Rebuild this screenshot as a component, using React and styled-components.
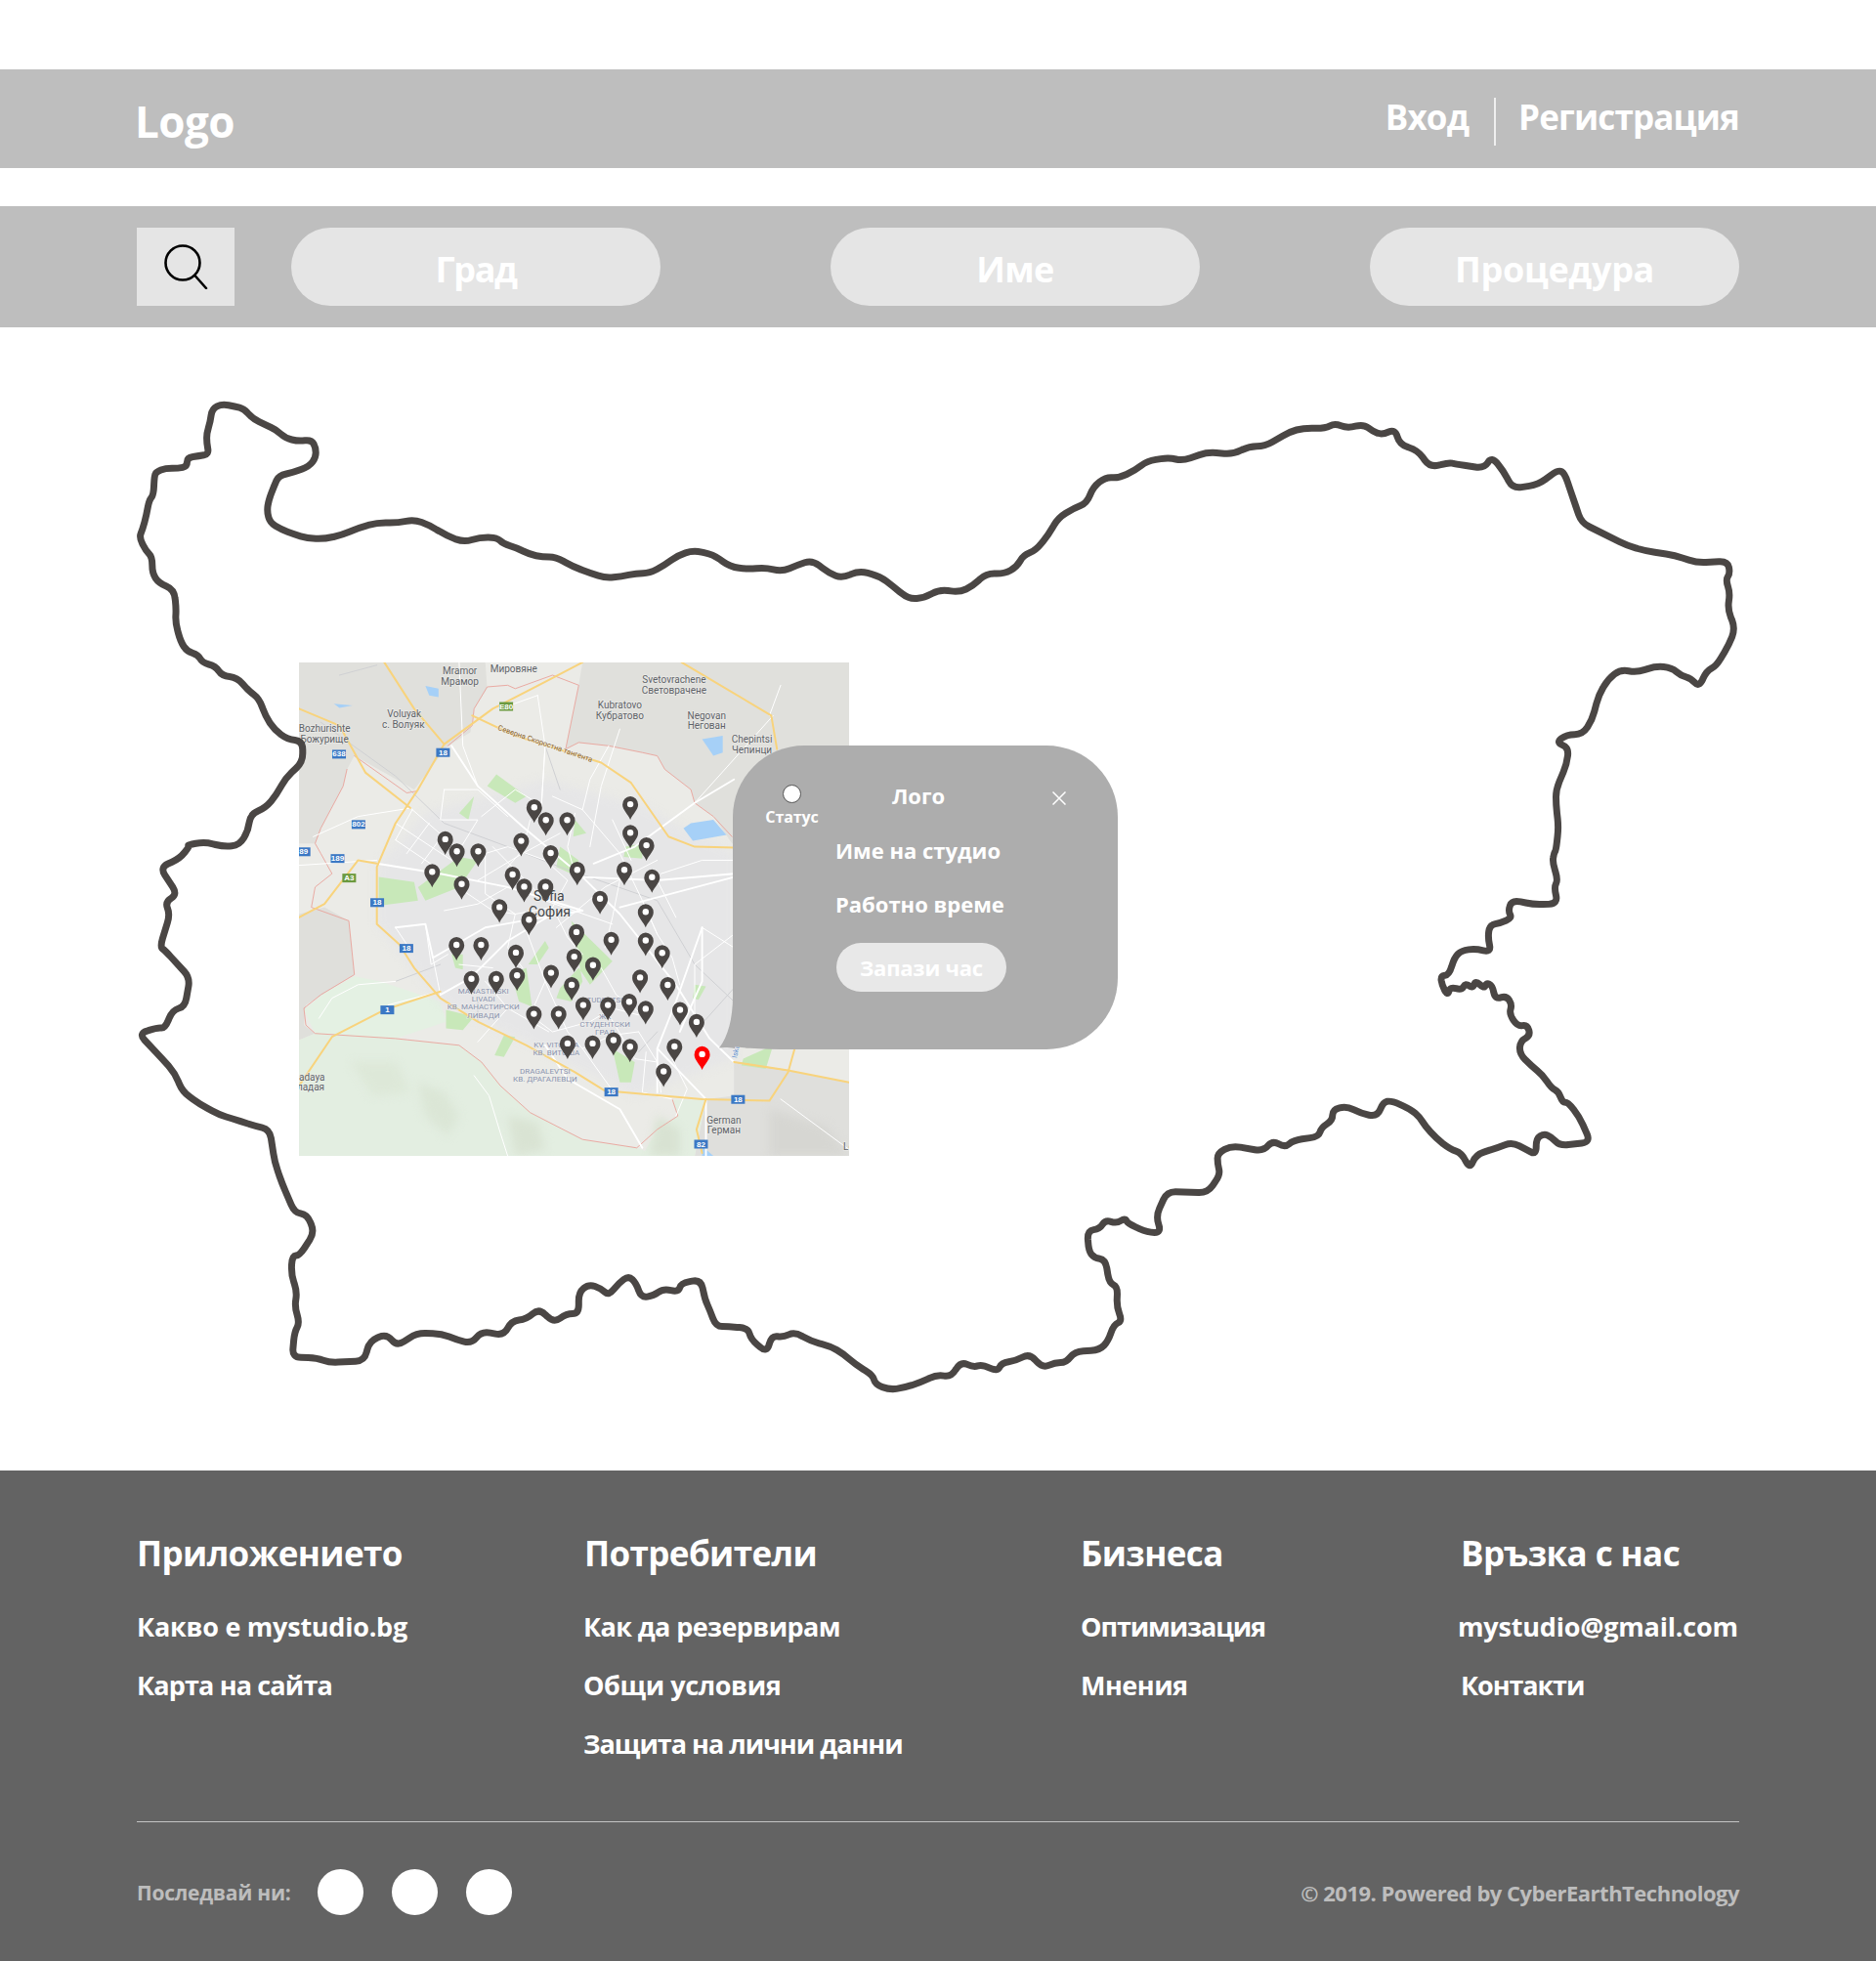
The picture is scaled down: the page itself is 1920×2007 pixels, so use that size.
import React from "react";
import styled, { createGlobalStyle } from "styled-components";

const GlobalStyle = createGlobalStyle`
  html, body { margin: 0; padding: 0; background: #fff; }
  body { font-family: "Open Sans", "Noto Sans", sans-serif; font-weight: 700; }
`;

/* ---------- page chrome ---------- */
const Page = styled.div`
  width: 1920px;
  padding-top: 71px;
`;
const Header = styled.header`
  height: 101px;
  background: #bebebe;
  padding: 0 140px;
  box-sizing: border-box;
  display: flex;
  align-items: center;
  justify-content: space-between;
  color: #fff;
`;
const Logo = styled.div`
  font-size: 44px;
  line-height: 50px;
  letter-spacing: -0.6px;
  margin: 4px 0 0 -2px;
`;
const Auth = styled.nav`
  display: flex;
  align-items: center;
  font-size: 35px;
  letter-spacing: -0.85px;
  margin-top: -4px;
`;
const AuthLink = styled.a`
  line-height: 44px;
`;
const AuthDivider = styled.span`
  width: 2px;
  height: 49px;
  margin: 10px 23px 0 26px;
  background: #efefef;
`;
const SearchBar = styled.section`
  margin-top: 39px;
  height: 124px;
  background: #bebebe;
  padding: 22px 140px;
  box-sizing: border-box;
  display: flex;
  gap: 58px;
`;
const SearchButton = styled.button`
  width: 100px;
  height: 80px;
  padding: 0;
  border: 0;
  background: #e5e5e5;
  display: flex;
  align-items: center;
  justify-content: center;
`;
const Filters = styled.div`
  flex: 1;
  display: flex;
  justify-content: space-between;
`;
const FilterPill = styled.div`
  width: 378px;
  height: 80px;
  border-radius: 40px;
  background: #e5e5e5;
  color: #fff;
  font-size: 36px;
  letter-spacing: ${(p) => p.$track}px;
  display: flex;
  align-items: center;
  justify-content: center;
  padding-top: 4px;
  box-sizing: border-box;
`;

/* ---------- canvas with the country outline ---------- */
const Canvas = styled.main`
  position: relative;
  height: 1170px;
`;
const OutlineSvg = styled.svg`
  position: relative;
  z-index: 1;
  display: block;
  width: 1920px;
  height: 1170px;
  pointer-events: none;
`;
const MapFrame = styled.div`
  position: absolute;
  left: 306px;
  top: 343px;
  width: 563px;
  height: 505px;
  overflow: hidden;
  background: #ebebe7;
`;
const MapSvg = styled.svg`
  display: block;
  width: 563px;
  height: 505px;
`;
const MapLayer = styled.g`
  filter: blur(${(p) => p.$blur}px);
`;
const Line = styled.polyline`
  fill: none;
  stroke: ${(p) => p.$c};
  stroke-width: ${(p) => p.$w}px;
  stroke-linejoin: round;
  stroke-linecap: round;
`;
const MapLabel = styled.text`
  font-family: Roboto, sans-serif;
  font-weight: 400;
  font-size: ${(p) => p.$s || 10}px;
  fill: ${(p) => p.$c || "#5f6368"};
  text-anchor: middle;
  dominant-baseline: middle;
  paint-order: stroke;
  stroke: rgba(240, 240, 238, 0.6);
  stroke-width: 1.5px;
`;
const ShieldText = styled.text`
  font-family: "Liberation Sans", sans-serif;
  font-weight: 700;
  font-size: 8px;
  fill: #fff;
  text-anchor: middle;
  dominant-baseline: central;
`;

/* ---------- popup ---------- */
const Popup = styled.aside`
  position: absolute;
  z-index: 2;
  left: 750px;
  top: 428px;
  width: 394px;
  height: 311px;
  background: #adadad;
  border-radius: 73px 73px 73px 60px / 73px 73px 73px 4px;
  padding-top: 40px;
  box-sizing: border-box;
  color: #fff;
`;
const PopupTail = styled.svg`
  position: absolute;
  left: -14px;
  bottom: 1px;
  width: 16px;
  height: 54px;
`;
const PopupTop = styled.div`
  height: 52px;
  display: grid;
  grid-template-columns: 121px 138px 1fr;
  align-items: start;
`;
const StatusCell = styled.div`
  display: flex;
  flex-direction: column;
  align-items: center;
  font-size: 16px;
  line-height: 22px;
  letter-spacing: -0.1px;
`;
const StatusDot = styled.span`
  width: 19px;
  height: 19px;
  border-radius: 50%;
  background: #fff;
  border: 1px solid #555;
  box-sizing: border-box;
  margin-bottom: 3px;
`;
const PopupLogo = styled.div`
  font-size: 22px;
  line-height: 22px;
  text-align: center;
`;
const CloseIcon = styled.svg`
  width: 14px;
  height: 14px;
  justify-self: end;
  margin: 7px 53px 0 0;
`;
const PopupBody = styled.div`
  margin-left: 105px;
  display: flex;
  flex-direction: column;
  align-items: flex-start;
  gap: 25px;
`;
const PopupLine = styled.div`
  font-size: 22px;
  line-height: 30px;
  white-space: nowrap;
`;
const BookButton = styled.button`
  width: 174px;
  height: 50px;
  margin: 0 0 0 1px;
  border: 0;
  border-radius: 25px;
  background: #e8e8e8;
  color: #fff;
  font-family: inherit;
  font-weight: 700;
  font-size: 22px;
  letter-spacing: -0.2px;
  padding: 0;
`;

/* ---------- footer ---------- */
const Footer = styled.footer`
  height: 502px;
  background: #636363;
  padding: 61px 140px 0;
  box-sizing: border-box;
  color: #fff;
`;
const FooterGrid = styled.div`
  display: grid;
  grid-template-columns: 457px 509px 386px 1fr;
  height: 298px;
  border-bottom: 1px solid #c4c4c4;
`;
const FooterColumn = styled.div`
  display: flex;
  flex-direction: column;
  align-items: flex-start;
`;
const FooterTitle = styled.h3`
  margin: 0 0 21px ${(p) => p.$nudge || 0}px;
  font-size: 35px;
  line-height: 48px;
  font-weight: 700;
  letter-spacing: -0.6px;
  white-space: nowrap;
`;
const FooterLink = styled.a`
  font-size: 27px;
  line-height: 60px;
  letter-spacing: ${(p) => p.$track}px;
  white-space: nowrap;
  margin-left: ${(p) => p.$nudge || 0}px;
`;
const FooterBottom = styled.div`
  height: 143px;
  display: flex;
  align-items: center;
  justify-content: space-between;
  color: #bdbdbd;
  font-size: 22px;
  letter-spacing: -0.5px;
`;
const Follow = styled.div`
  display: flex;
  align-items: center;
  gap: 29px;
`;
const FollowLabel = styled.span`
  margin-right: -2px;
  font-size: 21px;
  letter-spacing: -0.25px;
`;
const SocialDot = styled.span`
  width: 47px;
  height: 47px;
  border-radius: 50%;
  background: #fff;
`;

/* ---------- data ---------- */
const trace = (pts, ox, oy, sx, sy) => {
  const out = [];
  for (let i = 0; i < pts.length; i += 2) {
    out.push([ox + pts[i] / sx, oy + pts[i + 1] / sy]);
  }
  return out;
};

const NORTH_WEST = [95,480,103,455,112,410,118,365,128,350,130,290,135,278,155,268,185,268,205,262,205,235,232,230,255,225,250,190,250,160,258,125,262,85,285,70,315,78,335,85,355,115,385,135,410,150,430,175,460,185,490,180,500,205,500,235,485,262,450,280,415,290,405,320,392,365,388,400,395,435,420,455,450,470,480,483,520,485,560,472,600,450,640,435,690,435,725,425,760,442,800,475,840,495,875,480,915,480,930,500,960,512,990,532,1020,540,1050,540,1090,570,1130,590,1165,605,1200,600,1235,590,1265,590,1300,565,1330,535,1365,520,1410,532,1450,570,1490,578,1530,572,1568,585];
const NORTH_EAST = [25,565,48,550,75,590,95,605,122,582,155,600,175,630,200,670,225,665,248,640,280,648,300,630,322,590,350,592,370,570,380,535,400,520,420,470,435,420,460,390,480,375,490,325,510,295,530,298,555,275,575,245,610,235,630,245,670,218,710,225,735,200,760,200,800,155,820,145,855,145,870,130,890,145,915,132,930,155,945,165,965,147,972,195,1000,212,1020,265,1050,250,1060,255,1105,268,1117,232,1135,275,1150,330,1190,318,1222,272,1232,285,1245,360,1258,435,1330,505,1360,522,1405,535,1440,558,1488,553,1492,590,1485,610,1492,650,1488,700,1500,760,1490,810,1470,875,1455,890,1443,940,1430,912,1415,905,1400,880,1375,875,1345,895,1320,885,1300,915,1285,965,1275,1040,1260,1085,1235,1085,1218,1110,1238,1125,1235,1175,1218,1255,1218,1300,1222,1370,1218,1440];
const SOUTH_EAST = [1290,35,1287,60,1297,110,1290,130,1297,175,1255,178,1215,165,1208,195,1215,215,1195,228,1175,235,1172,270,1178,310,1150,300,1125,305,1112,325,1103,372,1088,375,1090,400,1100,430,1105,405,1125,415,1132,395,1145,410,1150,388,1165,410,1170,395,1180,402,1185,440,1205,430,1215,455,1210,480,1225,515,1242,510,1248,540,1230,555,1228,590,1250,625,1270,650,1285,685,1298,695,1305,725,1315,725,1335,765,1355,835,1300,845,1285,820,1272,812,1258,825,1258,870,1240,855,1215,835,1190,850,1150,870,1140,910,1125,865,1105,855,1080,825,1060,790,1050,765,1035,745,1000,720,985,725,975,765,945,755,920,735,895,745,895,775,875,795,870,820,825,830,810,850,788,830,772,860,715,845,690,865,690,895,695,925,672,975,600,972,580,1040,590,1085,565,1085,530,1060,525,1045,510,1060,490,1050,480,1075,458,1080,460,1135,470,1155,490,1160,497,1225,512,1235,510,1290,520,1330,505,1340,495,1385,480,1410,435,1415,420,1445,400,1445,378,1460,355,1420,330,1440,305,1445,298,1470,270,1450,255,1458,232,1442,215,1485,190,1478,160,1500,130,1515,105,1520,80,1505];
const SOUTH_WEST = [1555,1480,1520,1450,1495,1420,1470,1400,1430,1385,1398,1360,1375,1375,1352,1370,1342,1418,1310,1380,1305,1350,1265,1345,1240,1345,1228,1300,1218,1270,1210,1215,1170,1225,1165,1250,1135,1240,1115,1260,1090,1265,1080,1225,1065,1205,1045,1225,1025,1260,1010,1240,985,1228,965,1250,965,1310,940,1310,915,1335,885,1295,860,1325,830,1330,815,1370,770,1358,750,1392,720,1382,690,1365,640,1363,600,1400,580,1365,545,1385,535,1440,465,1445,440,1432,390,1430,395,1360,405,1335,395,1290,400,1250,388,1200,390,1150,405,1148,435,1085,420,1035,395,1030,370,950,355,890,345,800,315,790,270,770,245,760,205,730,170,695,155,645,130,605,82,535,120,518,135,520,150,470,175,460,185,380,135,305,125,295,145,205,135,170,160,150,125,75,165,50,185,15];
const WEST = [205,1425,245,1415,290,1430,325,1425,345,1380,350,1330,385,1310,410,1270,430,1220,470,1170,470,1105,435,1100,405,1070,385,1030,370,975,345,950,320,910,285,905,270,875,240,865,230,840,205,830,190,800,178,740,180,700,175,640,140,620,125,590,125,540,110,520];

/* a closed line through the traced border, each corner rounded over a few pixels */
const roundedClosed = (p, r) => {
  const f = (v) => v.toFixed(1);
  const toward = (c, n) => {
    const dx = n[0] - c[0];
    const dy = n[1] - c[1];
    const t = Math.min(0.5, r / Math.hypot(dx, dy));
    return [c[0] + dx * t, c[1] + dy * t];
  };
  let d = "";
  p.forEach((c, i) => {
    const a = toward(c, p[(i + p.length - 1) % p.length]);
    const b = toward(c, p[(i + 1) % p.length]);
    d += `${i ? "L" : "M"}${f(a[0])} ${f(a[1])}Q${f(c[0])} ${f(c[1])} ${f(b[0])} ${f(b[1])}`;
  });
  return d + "Z";
};

const OUTLINE = roundedClosed(
  [
    ...trace(NORTH_WEST, 100, 390, 2.24, 3),
    ...trace(NORTH_EAST, 800, 390, 1.537, 3),
    ...trace(SOUTH_EAST, 850, 860, 1.742, 2.703),
    ...trace(SOUTH_WEST, 100, 860, 1.96, 2.703),
    ...trace(WEST, 100, 390, 2.24, 3),
  ],
  9
);

const mx = (z) => z / 2.613 - 16;
const my = (z) => z / 2.904 - 18;
const pts = (a) => {
  let s = "";
  for (let i = 0; i < a.length; i += 2) s += `${mx(a[i]).toFixed(1)},${my(a[i + 1]).toFixed(1)} `;
  return s;
};

const CITY = [380,500,700,400,960,480,1205,620,1205,1230,940,1340,650,1180,420,1060,250,830,250,660];
const HILLS = [
  ["#dbe6d6", [360,1300,430,1330,470,1400,440,1460,380,1400]],
  ["#d9e3d3", [600,1400,680,1420,700,1500,620,1519]],
  ["#dde8d8", [180,1240,300,1240,340,1330,240,1340]],
  ["#d8e2d2", [1000,1400,1060,1440,1060,1519,980,1519]],
  ["#d6d6d2", [1300,1380,1450,1430,1513,1519,1300,1519]],
];
const AREAS = [
  ["#e0e0dc", [42,52,540,52,545,130,510,190,500,260,440,300,350,430,190,330,170,370,160,420,100,545,85,590,42,590]],
  ["#e0e0dc", [800,52,1513,52,1513,620,1200,590,1150,510,1100,470,1090,430,1020,370,1000,330,960,320,870,300,790,290,755,310,790,120]],
  ["#dfdfdb", [42,800,110,780,175,820,190,980,60,1070,55,1130,85,1155,42,1175]],
  ["#dfdfdc", [1205,1240,1350,1265,1513,1300,1513,1519,1100,1519,1130,1350,1205,1340]],
  ["#e3eee1", [42,1175,85,1155,300,1170,470,1190,530,1240,580,1310,660,1390,800,1470,945,1495,1000,1519,42,1519]],
  ["#e3eee1", [1000,1440,1055,1400,1040,1352,1130,1352,1100,1519,960,1519]],
  ["#e4f1e3", [55,1085,110,1035,190,985,260,1000,420,1060,435,1120,300,1170,85,1155]],
];
const PARKS = [
  [570,385,650,450,620,470,545,420],
  [470,500,510,450,495,520],
  [255,690,350,705,360,760,255,775],
  [360,720,470,630,520,640,470,720,380,760],
  [740,600,790,640,770,680,730,660],
  [915,600,960,590,960,635,910,630],
  [770,820,880,940,820,1010,790,960,740,1020,730,1050,770,1060,800,1000],
  [610,980,650,960,665,1075,630,1060],
  [435,1085,510,1105,480,1145,435,1140],
  [655,950,700,880,710,900,680,950],
  [590,1160,620,1165,590,1225,565,1220],
  [880,1200,940,1240,930,1300,900,1300],
  [1230,1230,1310,1190,1290,1260,1225,1250],
  [1100,1010,1130,1015,1110,1055,1095,1050],
  [450,920,480,920,480,965,460,960],
  [780,520,810,560,775,570],
];
const WATER = [
  [1120,280,1175,270,1175,320,1150,330],
  [1090,530,1150,520,1185,565,1095,582,1070,545],
  [380,122,415,130,415,155,390,150],
  [135,175,185,180,150,187],
  [1120,1490,1150,1519,1120,1519],
];
const MAJOR_ROADS = [
  [450,300,520,420,640,540,800,690,900,800,1050,1010,1140,1170,1205,1240],
  [250,650,420,680,600,720,800,790],[800,690,1000,700,1205,680],[900,780,1205,690],
  [300,840,380,830,400,930,540,840,640,820,800,790],[1120,840,1050,1060,1000,1200,1000,1330],
  [830,650,940,600,1100,470,1205,400],[420,1040,500,990,600,880,720,800],[1120,840,1120,1000,1060,1150],
  [700,1190,760,1290,900,1380,960,1495],[1000,1200,1130,1350,1130,1519],
];
const MINOR_ROADS = [
  [300,530,450,640],[340,485,470,610],[300,580,420,670],[42,655,250,640],[345,490,300,580],[390,530,330,620],[430,560,370,650],
  [80,570,200,510,340,485],[700,300,690,480],[430,430,420,520,520,520,470,610],[430,430,520,430,600,510],
  [530,510,620,430,680,470],[720,450,800,490,820,400,870,300],[1010,680,1120,640,1205,640],[1100,470,1310,210],[1205,860,1100,950],
  [300,840,330,890],[640,820,700,1000,760,1150,800,1200],[540,1000,600,1080,710,1150],[280,1070,420,1030],
  [850,1060,940,1230,1000,1240],[1330,1350,1513,1500],[950,1150,1000,1240,1010,1330],
  [470,52,480,300,520,420],[680,150,700,300,690,480,680,520],[580,190,680,150],[1330,120,1300,210],[900,250,850,420,820,600],
  [510,1280,550,1340,580,1450,600,1519],[95,1110,130,1050,200,1010,300,1000],[560,600,700,760,880,830],[520,700,640,620,740,560],
  [800,490,900,620,960,760,1000,860],[730,840,860,720,1000,640],[600,1080,520,1180],[1040,1230,1080,1320,1050,1400],
  [540,620,600,600,700,640,760,700,720,780,620,800,540,740,540,620],[620,800,600,900,640,960],[720,780,760,870,800,920],
  [900,700,880,810,860,900],[1000,700,1050,810],[960,760,1000,860,1040,930,1060,1010],[1120,840,1205,900],[1100,950,1100,1140],
  [700,1000,660,1100,720,1150,820,1120,880,1080,950,1100],[800,1200,880,1160,950,1150],[850,960,890,1040,950,1090],
  [400,930,420,1040],[380,830,395,950,440,920],[470,950,560,960],[800,1200,890,1340],[970,1210,960,1330,1040,1350],
  [480,730,560,790,620,800],[430,790,520,770,600,720],[660,520,640,610,600,660],[780,500,760,600,780,680],[880,520,930,640],
];
const GREY_LINES = [
  [100,230,300,390,430,530,600,600,740,660,1000,760,1100,950,1205,1060],[520,1060,520,1120],[950,1210,1000,1150],
  [700,300,740,430],[150,90,250,60],[1100,1150,1205,1020],[300,1000,420,950],
];
const YELLOW_ROADS = [
  [270,52,350,190,430,295,360,430,300,530,250,660,250,830,310,890,350,960,420,1050,520,1120,650,1190,780,1270,860,1325,1120,1350,1300,1355,1350,1270,1370,1190],
  [42,190,150,240,220,380,340,485],[800,52,700,110,560,190,430,295],[505,210,620,270,850,350,930,410,1030,570,1100,600,1205,603],
  [1065,52,1305,210,1320,310],[42,810,110,770,200,640,250,650],[42,1310,130,1165,270,1085,420,1030],[1205,1240,1350,1265,1513,1300],
  [1130,1350,1105,1440,1120,1510],
];
const RED_LINES = [
  [440,300,505,240,510,190,545,125,600,120,620,130,720,90,790,120,755,310,790,290,870,300,960,320,1000,330,1020,370,1090,430,1100,470,1150,510,1200,570],
  [190,330,330,440,355,435],
  [170,370,160,420,100,545,85,590,100,620,130,680,85,720,75,780,175,820,190,980,100,1040,55,1080,60,1130,85,1155,300,1170,470,1190,530,1240,580,1310,660,1390,800,1470,945,1495,1000,1440,1055,1400,1040,1350],
  [1205,1240,1350,1265],
];
const SHIELDS = [
  ["E80",596,183,"#6b9a3f"],["18",427,320],["638",149,325],["802",201,534],["189",145,635],["89",54,615],["A3",176,693,"#6b9a3f"],
  ["18",251,766],["18",329,902],["1",278,1085],["18",877,1329],["18",1216,1351],["82",1117,1484],
];
const LABELS = [
  ["Mramor",472,80],["Мрамор",472,112],["Мировяне",616,73],["Svetovrachene",1045,106],["Световрачене",1045,138],["Kubratovo",900,182],
  ["Кубратово",900,213],["Negovan",1132,212],["Негован",1132,243],["Chepintsi",1253,283],["Чепинци",1253,314],["Voluyak",323,207],
  ["с. Волуяк",321,238],["Bozhurishte",110,251],["Божурище",110,283],["Sofia",710,750,14,"#44474a"],["София",712,797,14,"#44474a"],
  ["MANASTIRSKI",535,1032,8,"#8a93ad"],["LIVADI",535,1055,8,"#8a93ad"],["КВ. МАНАСТИРСКИ",535,1078,8,"#8a93ad"],["ЛИВАДИ",535,1102,8,"#8a93ad"],
  ["STUDENTSKI",860,1058,8,"#8a93ad"],["ЖК",860,1107,8,"#8a93ad"],["СТУДЕНТСКИ",860,1130,8,"#8a93ad"],["ГРАД",860,1153,8,"#8a93ad"],
  ["KV. VITOSHA",730,1189,8,"#8a93ad"],["КВ. ВИТОША",730,1213,8,"#8a93ad"],["DRAGALEVTSI",700,1268,8,"#8a93ad"],["КВ. ДРАГАЛЕВЦИ",700,1292,8,"#8a93ad"],
  ["Vladaya",65,1287],["Владая",65,1318],["German",1178,1414],["Герман",1178,1445],["Lo",1512,1495],
];
const PINS = [
  [671,484],[702,522],[759,522],[928,475],[928,560],[971,597],[433,579],[464,615],[521,615],[636,584],[715,620],[398,676],[477,712],[613,684],[644,720],[701,720],[786,670],[912,670],[986,692],[578,781],[657,818],[847,756],[969,795],[463,893],[529,893],[622,916],[784,855],[877,878],[969,880],[1013,917],[778,928],[828,953],[503,994],[569,994],[625,984],[716,976],[771,1012],[954,990],[1028,1012],[670,1098],[736,1098],[802,1072],[868,1072],[925,1062],[969,1083],[1061,1086],[1105,1122],[760,1186],[827,1186],[883,1176],[927,1196],[1046,1195],[1017,1269],
];

const Pin = ({ x, y, color }) => (
  <g transform={`translate(${mx(x).toFixed(1)} ${my(y).toFixed(1)})`}>
    <path d="M0 15.5C-2 10-8 5.5-8 0A8 8.6 0 1 1 8 0C8 5.5 2 10 0 15.5Z" fill={color} />
    <circle cx="0" cy="-0.5" r="3.2" fill="#fff" />
  </g>
);

const SofiaMap = () => (
  <MapFrame>
    <MapSvg viewBox="0 0 563 505">
      <MapLayer $blur={0.4}>
        {AREAS.map(([c, a], i) => <polygon key={i} points={pts(a)} fill={c} />)}
      </MapLayer>
      <MapLayer $blur={5}>
        <polygon points={pts(CITY)} fill="#e6e6e7" />
        {HILLS.map(([c, a], i) => <polygon key={i} points={pts(a)} fill={c} />)}
      </MapLayer>
      <MapLayer $blur={0.4}>
        {PARKS.map((a, i) => <polygon key={i} points={pts(a)} fill="#c8e8b9" />)}
        {WATER.map((a, i) => <polygon key={i} points={pts(a)} fill="#a6d0f7" />)}
        {GREY_LINES.map((a, i) => <Line key={i} points={pts(a)} $c="#cfd0d3" $w={1} />)}
        {RED_LINES.map((a, i) => <Line key={i} points={pts(a)} $c="#e9a39b" $w={0.9} />)}
        {MINOR_ROADS.map((a, i) => <Line key={i} points={pts(a)} $c="#fff" $w={1} />)}
        {MAJOR_ROADS.map((a, i) => <Line key={i} points={pts(a)} $c="#fff" $w={1.9} />)}
        {YELLOW_ROADS.map((a, i) => <Line key={i} points={pts(a)} $c="#f8d37c" $w={2} />)}
      </MapLayer>
      {SHIELDS.map(([t, x, y, c], i) => (
        <g key={i}>
          <rect x={mx(x) - 7} y={my(y) - 4.5} width="14" height="9" fill={c || "#3b78c4"} />
          <ShieldText x={mx(x)} y={my(y)}>{t}</ShieldText>
        </g>
      ))}
      {LABELS.map(([t, x, y, s, c], i) => (
        <MapLabel key={i} x={mx(x)} y={my(y)} $s={s} $c={c}>{t}</MapLabel>
      ))}
      <MapLabel x={mx(700)} y={my(295)} $s={7.5} $c="#8a5f1e" transform={`rotate(19 ${mx(700)} ${my(295)})`}>
        Северна Скоростна тангента
      </MapLabel>
      <MapLabel x={mx(1212)} y={my(1205)} $s={7.5} $c="#5b8fd0" transform={`rotate(-78 ${mx(1212)} ${my(1205)})`}>
        Iskar
      </MapLabel>
      {PINS.map(([x, y], i) => <Pin key={i} x={x} y={y} color="#4a4644" />)}
      <Pin x={1120} y={1218} color="#ff0000" />
    </MapSvg>
  </MapFrame>
);

const FOOTER = [
  { title: "Приложението", links: [["Какво е mystudio.bg", -0.25], ["Карта на сайта", -0.85]] },
  { title: "Потребители", nudge: 1, links: [["Как да резервирам", -0.6], ["Общи условия", -0.4], ["Защита на лични данни", -1]] },
  { title: "Бизнеса", links: [["Оптимизация", -1.1], ["Мнения", -0.5]] },
  { title: "Връзка с нас", nudge: 3, links: [["mystudio@gmail.com", -0.2], ["Контакти", -1.1, 3]] },
];

export default function App() {
  return (
    <Page>
      <GlobalStyle />
      <Header>
        <Logo>Logo</Logo>
        <Auth>
          <AuthLink>Вход</AuthLink>
          <AuthDivider />
          <AuthLink>Регистрация</AuthLink>
        </Auth>
      </Header>
      <SearchBar>
        <SearchButton aria-label="Търси">
          <svg width="46" height="46" viewBox="0 0 46 46" fill="none" stroke="#000" strokeWidth="2.6" strokeLinecap="round">
            <circle cx="20" cy="19" r="17.5" />
            <line x1="32.5" y1="32" x2="44" y2="45" />
          </svg>
        </SearchButton>
        <Filters>
          <FilterPill $track={-1.4}>Град</FilterPill>
          <FilterPill $track={-0.6}>Име</FilterPill>
          <FilterPill $track={-0.3}>Процедура</FilterPill>
        </Filters>
      </SearchBar>
      <Canvas>
        <SofiaMap />
        <OutlineSvg viewBox="0 335 1920 1170">
          <path d={OUTLINE} fill="none" stroke="#4a4644" strokeWidth="7" strokeLinejoin="round" strokeLinecap="round" />
        </OutlineSvg>
        <Popup>
          <PopupTail viewBox="0 0 16 54">
            <path d="M14 0C14 24 9 42 0 53.5C5 52.5 10 53 16 54V0Z" fill="#adadad" />
          </PopupTail>
          <PopupTop>
            <StatusCell>
              <StatusDot />
              Статус
            </StatusCell>
            <PopupLogo>Лого</PopupLogo>
            <CloseIcon viewBox="0 0 14 14" fill="none" stroke="#fff" strokeWidth="1.5">
              <path d="M0.5 0.5L13.5 13.5M13.5 0.5L0.5 13.5" />
            </CloseIcon>
          </PopupTop>
          <PopupBody>
            <PopupLine>Име на студио</PopupLine>
            <PopupLine>Работно време</PopupLine>
            <BookButton>Запази час</BookButton>
          </PopupBody>
        </Popup>
      </Canvas>
      <Footer>
        <FooterGrid>
          {FOOTER.map((col) => (
            <FooterColumn key={col.title}>
              <FooterTitle $nudge={col.nudge}>{col.title}</FooterTitle>
              {col.links.map(([label, track, nudge]) => (
                <FooterLink key={label} $track={track} $nudge={nudge}>{label}</FooterLink>
              ))}
            </FooterColumn>
          ))}
        </FooterGrid>
        <FooterBottom>
          <Follow>
            <FollowLabel>Последвай ни:</FollowLabel>
            <SocialDot />
            <SocialDot />
            <SocialDot />
          </Follow>
          <span>© 2019. Powered by CyberEarthTechnology</span>
        </FooterBottom>
      </Footer>
    </Page>
  );
}
